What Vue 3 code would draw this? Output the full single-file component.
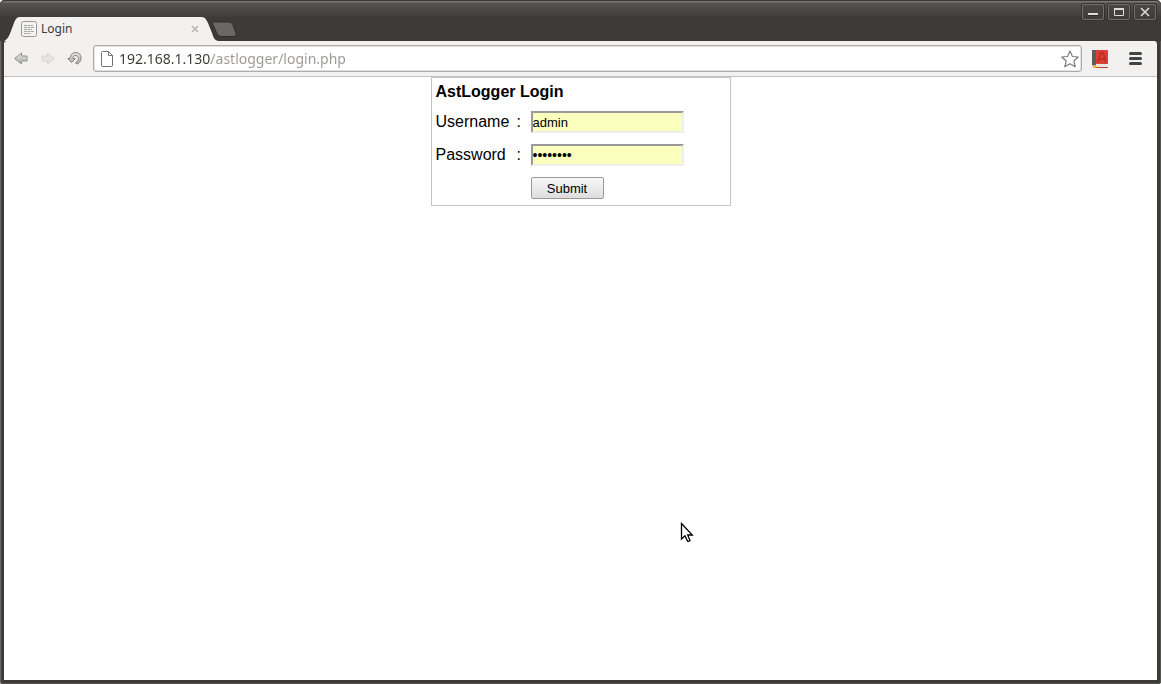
<script setup>
import { ref } from 'vue'

const address = ref('192.168.1.130/astlogger/login.php')
const username = ref('admin')
const password = ref('password')
</script>

<template>
  <div class="window">
    <header class="titlebar">
      <div class="tab">
        <svg class="tab-shape" width="214" height="24" viewBox="0 0 214 24" aria-hidden="true">
          <path d="M0 24C4 22 5 19 7 14L10 6C12 1 13 0 17 0H197C201 0 202 2 204 6L208 16C210 22 211 23 214 24Z" fill="#f2f1f0" />
        </svg>
        <svg class="favicon" width="16" height="16" viewBox="0 0 16 16" aria-hidden="true">
          <rect x=".5" y=".5" width="15" height="15" rx="2" fill="#f4f4f3" stroke="#989896" />
          <path d="M3 4.5H12M3 6.5H13M3 8.5H11M3 10.5H13M3 12.5H10" stroke="#a5a5a3" stroke-dasharray="3 .5" />
        </svg>
        <span class="tab-title">Login</span>
        <button class="tab-close" type="button" aria-label="Close tab">
          <svg width="8" height="8" viewBox="0 0 8 8"><path d="M1 1L7 7M7 1L1 7" stroke="#b5b4b2" stroke-width="1.5" /></svg>
        </button>
      </div>
      <button class="new-tab" type="button" aria-label="New tab">
        <svg width="28" height="17" viewBox="0 0 28 17"><path d="M3.500 1H19Q22 1 23 4L26 12Q27 15.500 24 15.500H11Q8 15.500 7 12.500L3 4Q1.500 1 3.500 1Z" fill="#696864" stroke="#302f2b" /></svg>
      </button>
      <div class="controls">
        <button type="button" aria-label="Minimize"><svg width="12" height="10" viewBox="0 0 12 10"><path d="M1 7.500H11" stroke="#292825" stroke-width="3" /><path d="M1 7H11" stroke="#deddd8" stroke-width="2" /></svg></button>
        <button type="button" aria-label="Maximize"><svg width="12" height="10" viewBox="0 0 12 10"><path d="M1.500 2V8.500H10.500V2" fill="none" stroke="#deddd8" /><path d="M1 2H11" stroke="#deddd8" stroke-width="2" /></svg></button>
        <button type="button" aria-label="Close"><svg width="12" height="10" viewBox="0 0 12 10"><path d="M2 1L10 9M10 1L2 9" stroke="#deddd8" stroke-width="1.600" /></svg></button>
      </div>
    </header>

    <nav class="toolbar">
      <button class="nav" type="button" aria-label="Back">
        <svg width="16" height="16" viewBox="0 0 16 16">
          <defs><linearGradient id="metal" x2="0" y2="1"><stop stop-color="#e6e6e5" /><stop offset="1" stop-color="#aaaaa9" /></linearGradient></defs>
          <path d="M1.500 7.500L8.500 2V5H14V10H8.500V13Z" fill="url(#metal)" stroke="#91918f" stroke-linejoin="round" />
        </svg>
      </button>
      <button class="nav" type="button" aria-label="Forward" disabled>
        <svg width="16" height="16" viewBox="0 0 16 16"><path d="M14.500 7.500L7.500 2V5H2V10H7.500V13Z" fill="#e4e4e2" stroke="#d6d6d4" stroke-linejoin="round" /></svg>
      </button>
      <button class="nav" type="button" aria-label="Reload">
        <svg width="16" height="16" viewBox="0 0 16 16">
          <path d="M3.200 7.500C3 3.500 6 1.300 9 1.500C15 2 16 9.500 10.500 13L8.500 12C12.500 9.500 12 5 9 4.500C7 4.200 5.800 5.500 6 7.500H8.500L4.500 11.500L.8 7.500Z" fill="url(#metal)" stroke="#858583" stroke-linejoin="round" />
        </svg>
      </button>
      <div class="omnibox">
        <svg class="page-icon" width="12" height="16" viewBox="0 0 12 16" aria-hidden="true"><path d="M.5 1.500Q.5.5 1.500.5H7.500L11.500 4.500V14.500Q11.500 15.500 10.500 15.500H1.500Q.5 15.500.5 14.500ZM7.500.5V4.500H11.500" fill="#fff" stroke="#737373" /></svg>
        <input v-model="address" class="address" type="text" aria-label="Address" spellcheck="false" />
        <button class="star" type="button" aria-label="Bookmark this page">
          <svg width="20" height="20" viewBox="0 0 20 20"><path d="M10 2L12.400 7.500L18.300 8L13.800 12L15.300 17.800L10 14.700L4.700 17.800L6.200 12L1.700 8L7.600 7.500Z" fill="#fff" stroke="#777" stroke-width="1.100" stroke-linejoin="round" /></svg>
        </button>
      </div>
      <button class="dictionary" type="button" aria-label="Dictionary">
        <svg width="17" height="18" viewBox="0 0 17 18">
          <path d="M1 0H5V15L3 17L1 15Z" fill="#5b5d5e" /><path d="M5 0H16Q17 0 17 1V14H5Z" fill="#df3e32" />
          <path d="M5 14H16V17H5Z" fill="#e9e6e6" /><path d="M5 17H17V18H5Z" fill="#c33b31" />
          <path d="M6.500 12L10 3H12L15 12M8 9H14" fill="none" stroke="#bd3029" stroke-width="1.800" />
          <path d="M2 15H5L6 17L5 18H2Z" fill="#efb326" />
        </svg>
      </button>
      <button class="menu" type="button" aria-label="Menu">
        <svg width="15" height="14" viewBox="0 0 15 14"><path d="M2.500 1.500H12.500M2.500 6.500H12.500M2.500 11.500H12.500" stroke="#414546" stroke-width="3" stroke-linecap="round" /></svg>
      </button>
    </nav>

    <main class="page">
      <form class="login" @submit.prevent>
        <table>
          <tbody>
            <tr><th colspan="3">AstLogger Login</th></tr>
            <tr>
              <td class="name"><label for="username">Username</label></td><td class="colon">:</td>
              <td><input id="username" v-model="username" class="field" type="text" spellcheck="false" /></td>
            </tr>
            <tr>
              <td class="name"><label for="password">Password</label></td><td class="colon">:</td>
              <td><input id="password" v-model="password" class="field secret" type="password" /></td>
            </tr>
            <tr><td></td><td></td><td><button class="submit" type="submit">Submit</button></td></tr>
          </tbody>
        </table>
      </form>
    </main>
    <svg class="cursor" width="14" height="22" viewBox="0 0 14 22" aria-hidden="true"><path d="M1.500 1.500V17L5 13.800L7.500 19Q8.500 20 10 18.500L7.700 13H12.300Z" fill="#fff" stroke="#000" stroke-width="1.300" /></svg>
  </div>
</template>

<style>
body {
  margin: 0;
  background: #fff;
}
</style>

<style scoped>
* { box-sizing: border-box; }

button {
  padding: 0;
  border: 0;
  background: none;
}

svg { display: block; }

.window {
  position: relative;
  display: flex;
  flex-direction: column;
  min-height: 100vh;
  padding: 0 4px 4px;
  background: #3c3b37;
  border-radius: 5px 5px 3px 3px;
  box-shadow: inset 1px 0 #686762, inset 2px 0 #494844, inset -1px 0 #555450, inset 0 -1px #555450;
  font-family: "Liberation Sans", Arial, sans-serif;
}

.titlebar {
  display: flex;
  height: 41px;
  margin: 0 -4px;
  padding: 0 5px 0 4px;
  border-top: 1px solid #393834;
  border-radius: 5px 5px 0 0;
  background: linear-gradient(#75746e 0, #75746e 1px, #565550 2px, #3c3b37 17px);
}

.tab {
  position: relative;
  display: flex;
  align-items: center;
  width: 210px;
  height: 24px;
  margin-top: 16px;
  padding: 0 15px 0 17px;
}

.tab-shape {
  position: absolute;
  top: 0;
  left: 0;
}

.favicon, .tab-title, .tab-close { position: relative; }

.tab-title {
  flex: 1;
  margin-left: 4px;
  color: #3c3b37;
  font: 12px/16px "Noto Sans", sans-serif;
}

.new-tab {
  align-self: flex-start;
  margin: 20px 0 0 -4px;
}

.controls {
  display: flex;
  gap: 4px;
  margin-left: auto;
  padding-top: 3px;
}

.controls button {
  display: grid;
  place-items: center;
  width: 22px;
  height: 16px;
  border: 1px solid #706f69;
  border-radius: 2px;
  background: linear-gradient(#484743, #3e3d39);
  box-shadow: 0 0 0 1px #34332f;
}

.toolbar {
  display: flex;
  align-items: center;
  height: 36px;
  padding: 0 14px 0 9px;
  border-bottom: 1px solid #c2c1bf;
  border-radius: 3px 3px 0 0;
  background: #f2f1f0;
}

.nav {
  flex: none;
  margin-right: 11px;
}

.nav + .omnibox { margin-left: -1px; }

.omnibox {
  display: flex;
  flex: 1;
  align-items: center;
  min-width: 0;
  height: 27px;
  margin-right: 9px;
  padding: 0 1px 0 7px;
  border: 1px solid #aeacaa;
  border-radius: 3px;
  box-shadow: inset 0 0 0 1px #e2e1e0;
  background: #fff;
}

.page-icon { flex: none; }

.address {
  flex: 1;
  min-width: 0;
  margin-left: 6px;
  padding: 1px 0 0;
  border: 0;
  outline: 0;
  background: linear-gradient(90deg, #3a3936 0, #3a3936 92px, #999795 92px);
  background-clip: text;
  color: transparent;
  caret-color: #3a3936;
  font: 14px/20px "Noto Sans", sans-serif;
}

.menu { margin-left: 20px; }

.page {
  flex: 1;
  background: #fff;
}

.login {
  width: 300px;
  margin: 0 auto;
  border: 1px solid #c4c4c4;
}

table {
  width: 100%;
  border-collapse: collapse;
  font-size: 16px;
  line-height: 22px;
}

th {
  height: 28px;
  padding: 0 4px;
  line-height: 20px;
  text-align: left;
}

td {
  height: 33px;
  padding: 5px 0 6px;
  vertical-align: top;
}

.name {
  width: 85px;
  padding-left: 4px;
}

.colon { width: 14px; }

.field {
  display: block;
  width: 153px;
  height: 22px;
  padding: 0;
  border: 2px solid;
  border-color: #9a9a9a #eee #eee #9a9a9a;
  outline: 0;
  background: #faffbd;
  color: #000;
  font: 13px "Liberation Sans", Arial, sans-serif;
}

.secret { font-size: 14px; }

.submit {
  display: block;
  width: 73px;
  height: 22px;
  border: 1px solid #999;
  border-radius: 2px;
  background: linear-gradient(#f8f8f8, #ddd);
  color: #000;
  font: 13px "Liberation Sans", Arial, sans-serif;
}

.cursor {
  position: absolute;
  top: 522px;
  left: 680px;
}
</style>
